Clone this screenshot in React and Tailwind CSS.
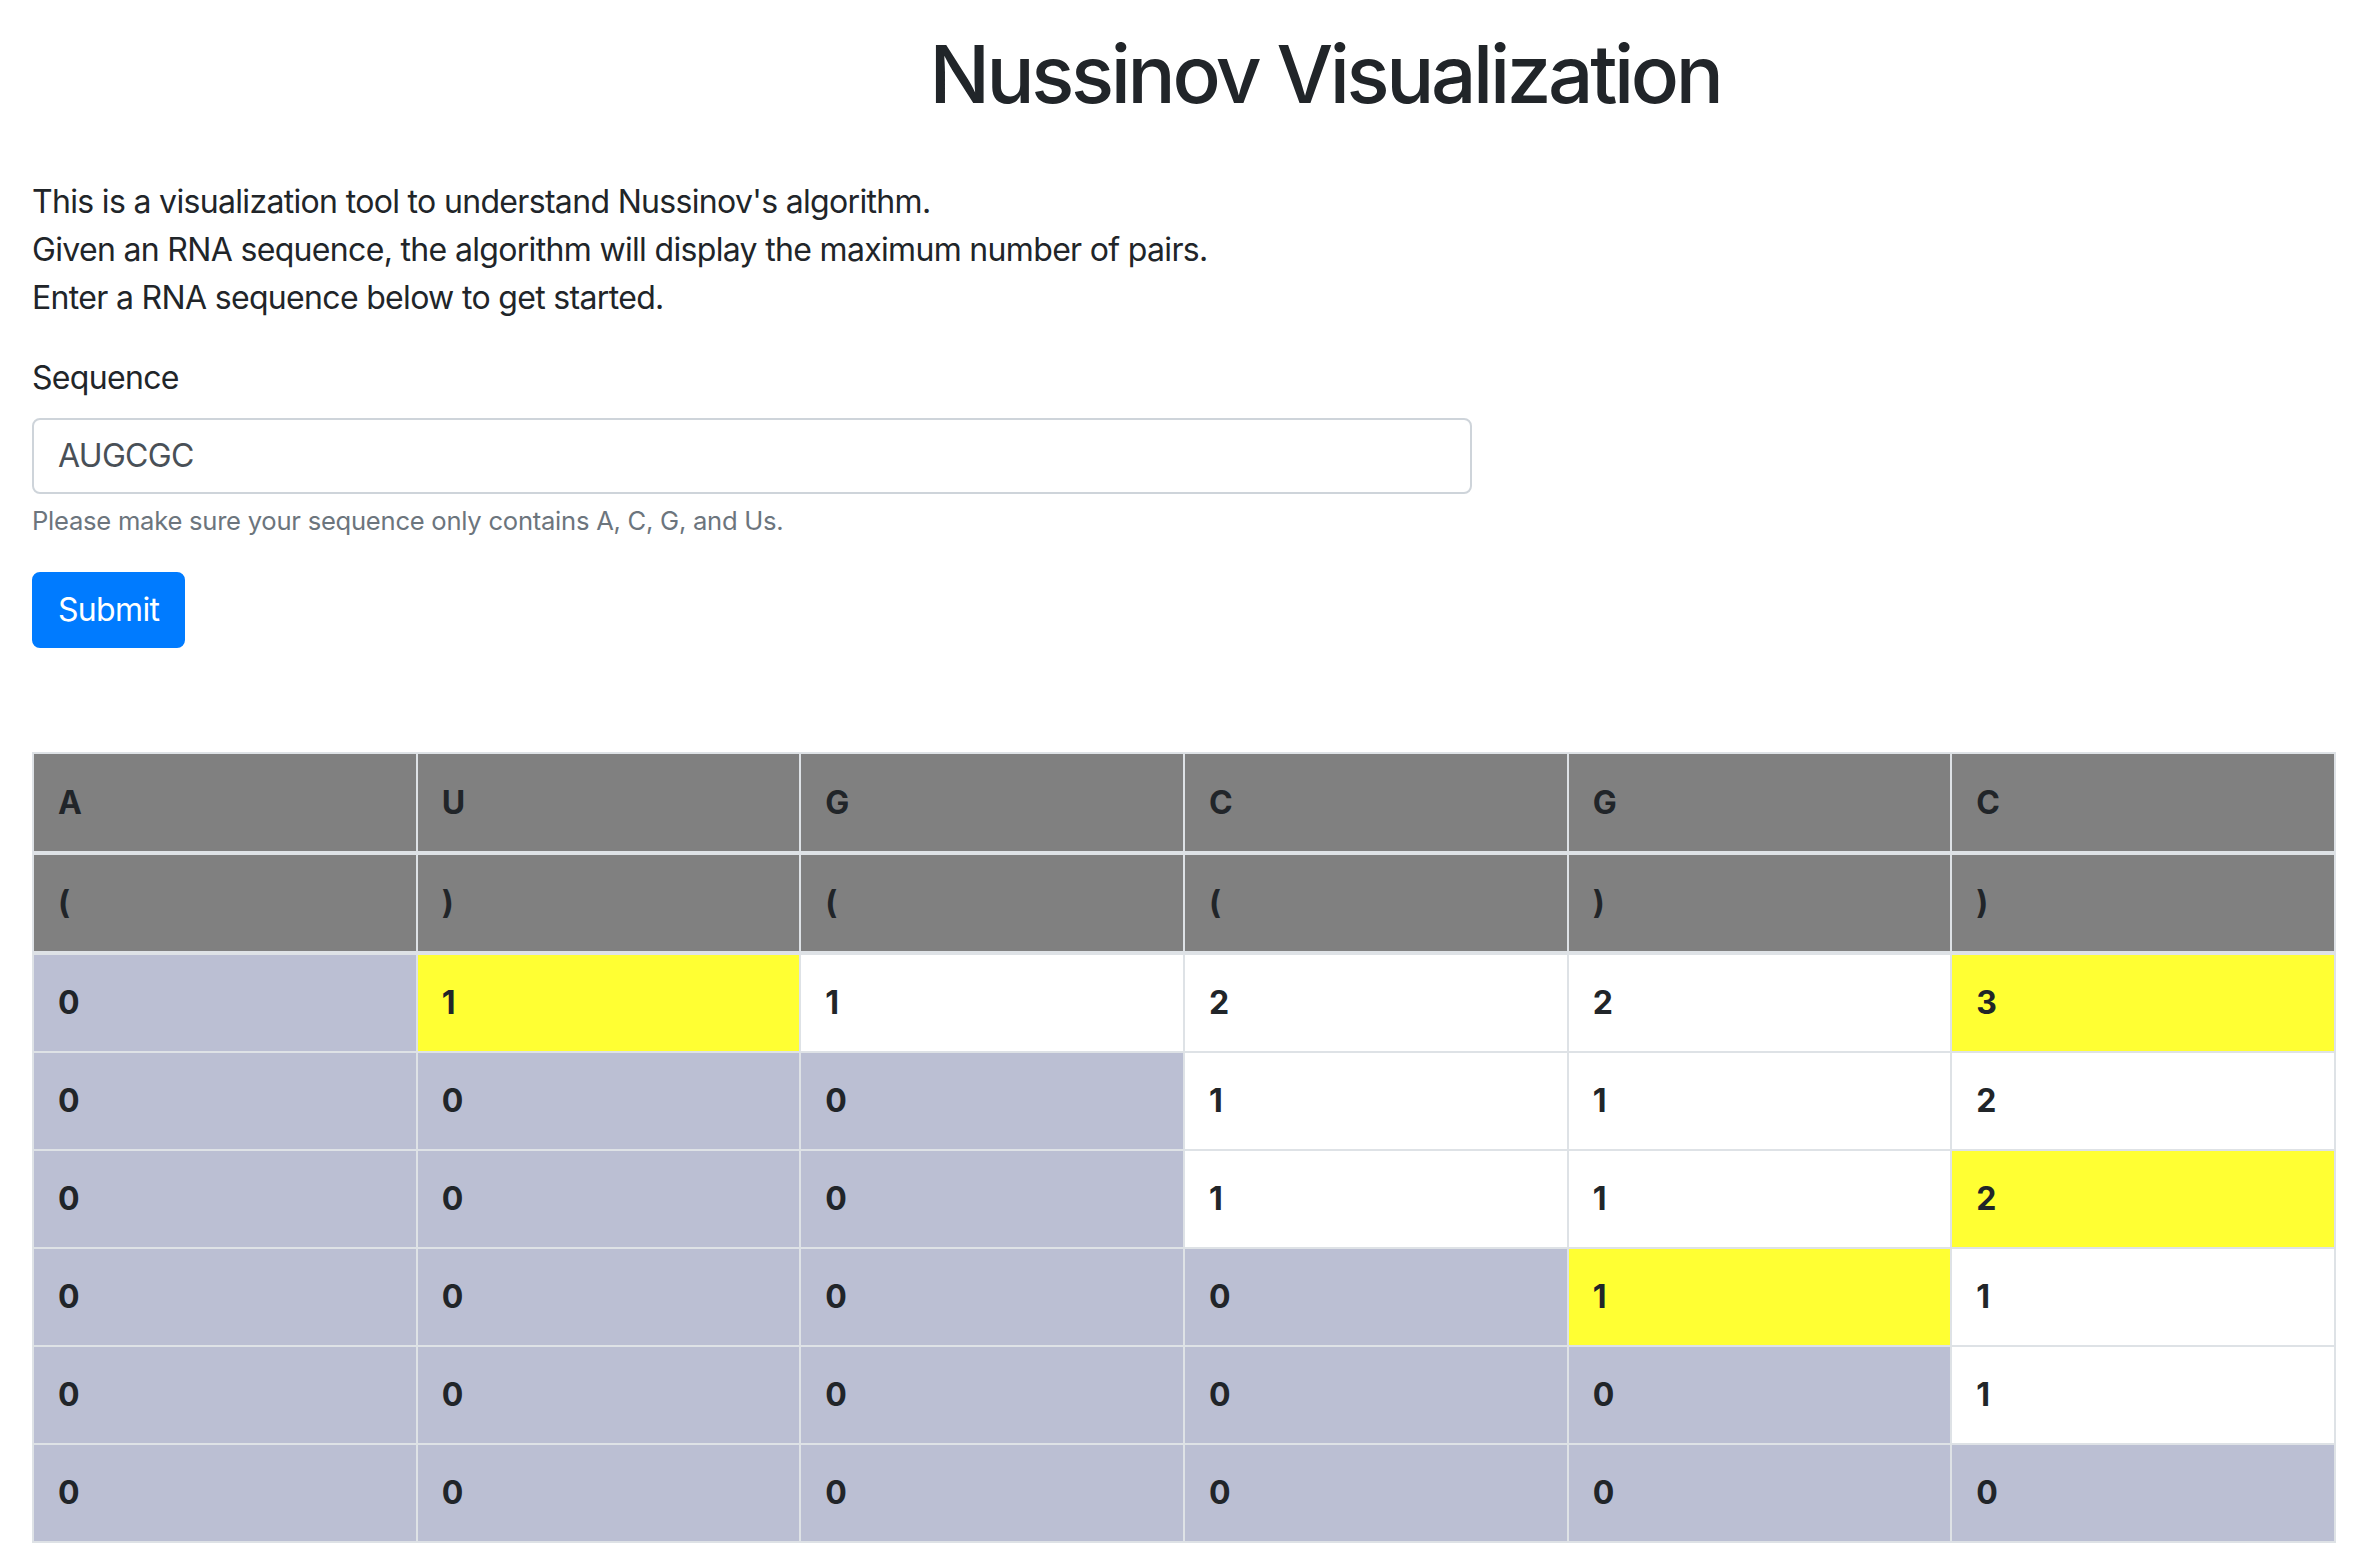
import React from "react";

const seq = ["A", "U", "G", "C", "G", "C"];
const dots = ["(", ")", "(", "(", ")", ")"];
// g = grey, y = yellow, w = white
const rows = [
  [["0", "g"], ["1", "y"], ["1", "w"], ["2", "w"], ["2", "w"], ["3", "y"]],
  [["0", "g"], ["0", "g"], ["0", "g"], ["1", "w"], ["1", "w"], ["2", "w"]],
  [["0", "g"], ["0", "g"], ["0", "g"], ["1", "w"], ["1", "w"], ["2", "y"]],
  [["0", "g"], ["0", "g"], ["0", "g"], ["0", "g"], ["1", "y"], ["1", "w"]],
  [["0", "g"], ["0", "g"], ["0", "g"], ["0", "g"], ["0", "g"], ["1", "w"]],
  [["0", "g"], ["0", "g"], ["0", "g"], ["0", "g"], ["0", "g"], ["0", "g"]],
];

const bgClass = {
  g: "bg-[#bbbfd3]",
  y: "bg-[#ffff33]",
  w: "bg-white",
};

export default function App() {
  return (
    <div
      className="w-[2362px] min-h-[1562px] bg-white px-[32px] text-[32px] leading-[48px] tracking-[-0.021em] text-[#212529]"
      style={{ fontFamily: "Inter, 'Noto Sans', 'Liberation Sans', sans-serif" }}
    >
      <h1 className="pt-[26px] pl-[288px] text-center text-[80px] leading-[96px] font-medium tracking-[-0.042em]">
        Nussinov Visualization
      </h1>

      <p className="mt-[56px] mb-[32px]">
        This is a visualization tool to understand Nussinov's algorithm.
        <br />
        Given an RNA sequence, the algorithm will display the maximum number of pairs.
        <br />
        Enter a RNA sequence below to get started.
      </p>

      <div className="mb-[32px]">
        <label className="block mb-[16px]">Sequence</label>
        <div className="w-[1440px] h-[76px] border-2 border-[#ced4da] rounded-[8px] px-[24px] flex items-center text-[#495057]">
          AUGCGC
        </div>
        <div className="mt-[8px] text-[25.6px] leading-[38.4px] tracking-[-0.01em] text-[#6c757d]">
          Please make sure your sequence only contains A, C, G, and Us.
        </div>
      </div>

      <button className="h-[76px] px-[24px] rounded-[8px] bg-[#007bff] border-2 border-[#007bff] text-white text-[32px] leading-[48px]">
        Submit
      </button>

      <table className="mt-[104px] w-[2304px] table-fixed border-collapse border-2 border-[#dee2e6]">
        <thead>
          <tr>
            {seq.map((s, i) => (
              <th
                key={i}
                className="bg-[#808080] border-2 border-b-4 border-[#dee2e6] px-[24px] py-[24px] h-[100px] text-left font-bold align-middle"
              >
                {s}
              </th>
            ))}
          </tr>
          <tr>
            {dots.map((s, i) => (
              <th
                key={i}
                className="bg-[#808080] border-2 border-b-4 border-[#dee2e6] px-[24px] py-[24px] h-[100px] text-left font-bold align-middle"
              >
                {s}
              </th>
            ))}
          </tr>
        </thead>
        <tbody>
          {rows.map((r, ri) => (
            <tr key={ri}>
              {r.map(([v, c], ci) => (
                <td
                  key={ci}
                  className={`${bgClass[c]} border-2 border-[#dee2e6] px-[24px] py-[24px] h-[98px] font-bold align-middle`}
                >
                  {v}
                </td>
              ))}
            </tr>
          ))}
        </tbody>
      </table>
    </div>
  );
}
